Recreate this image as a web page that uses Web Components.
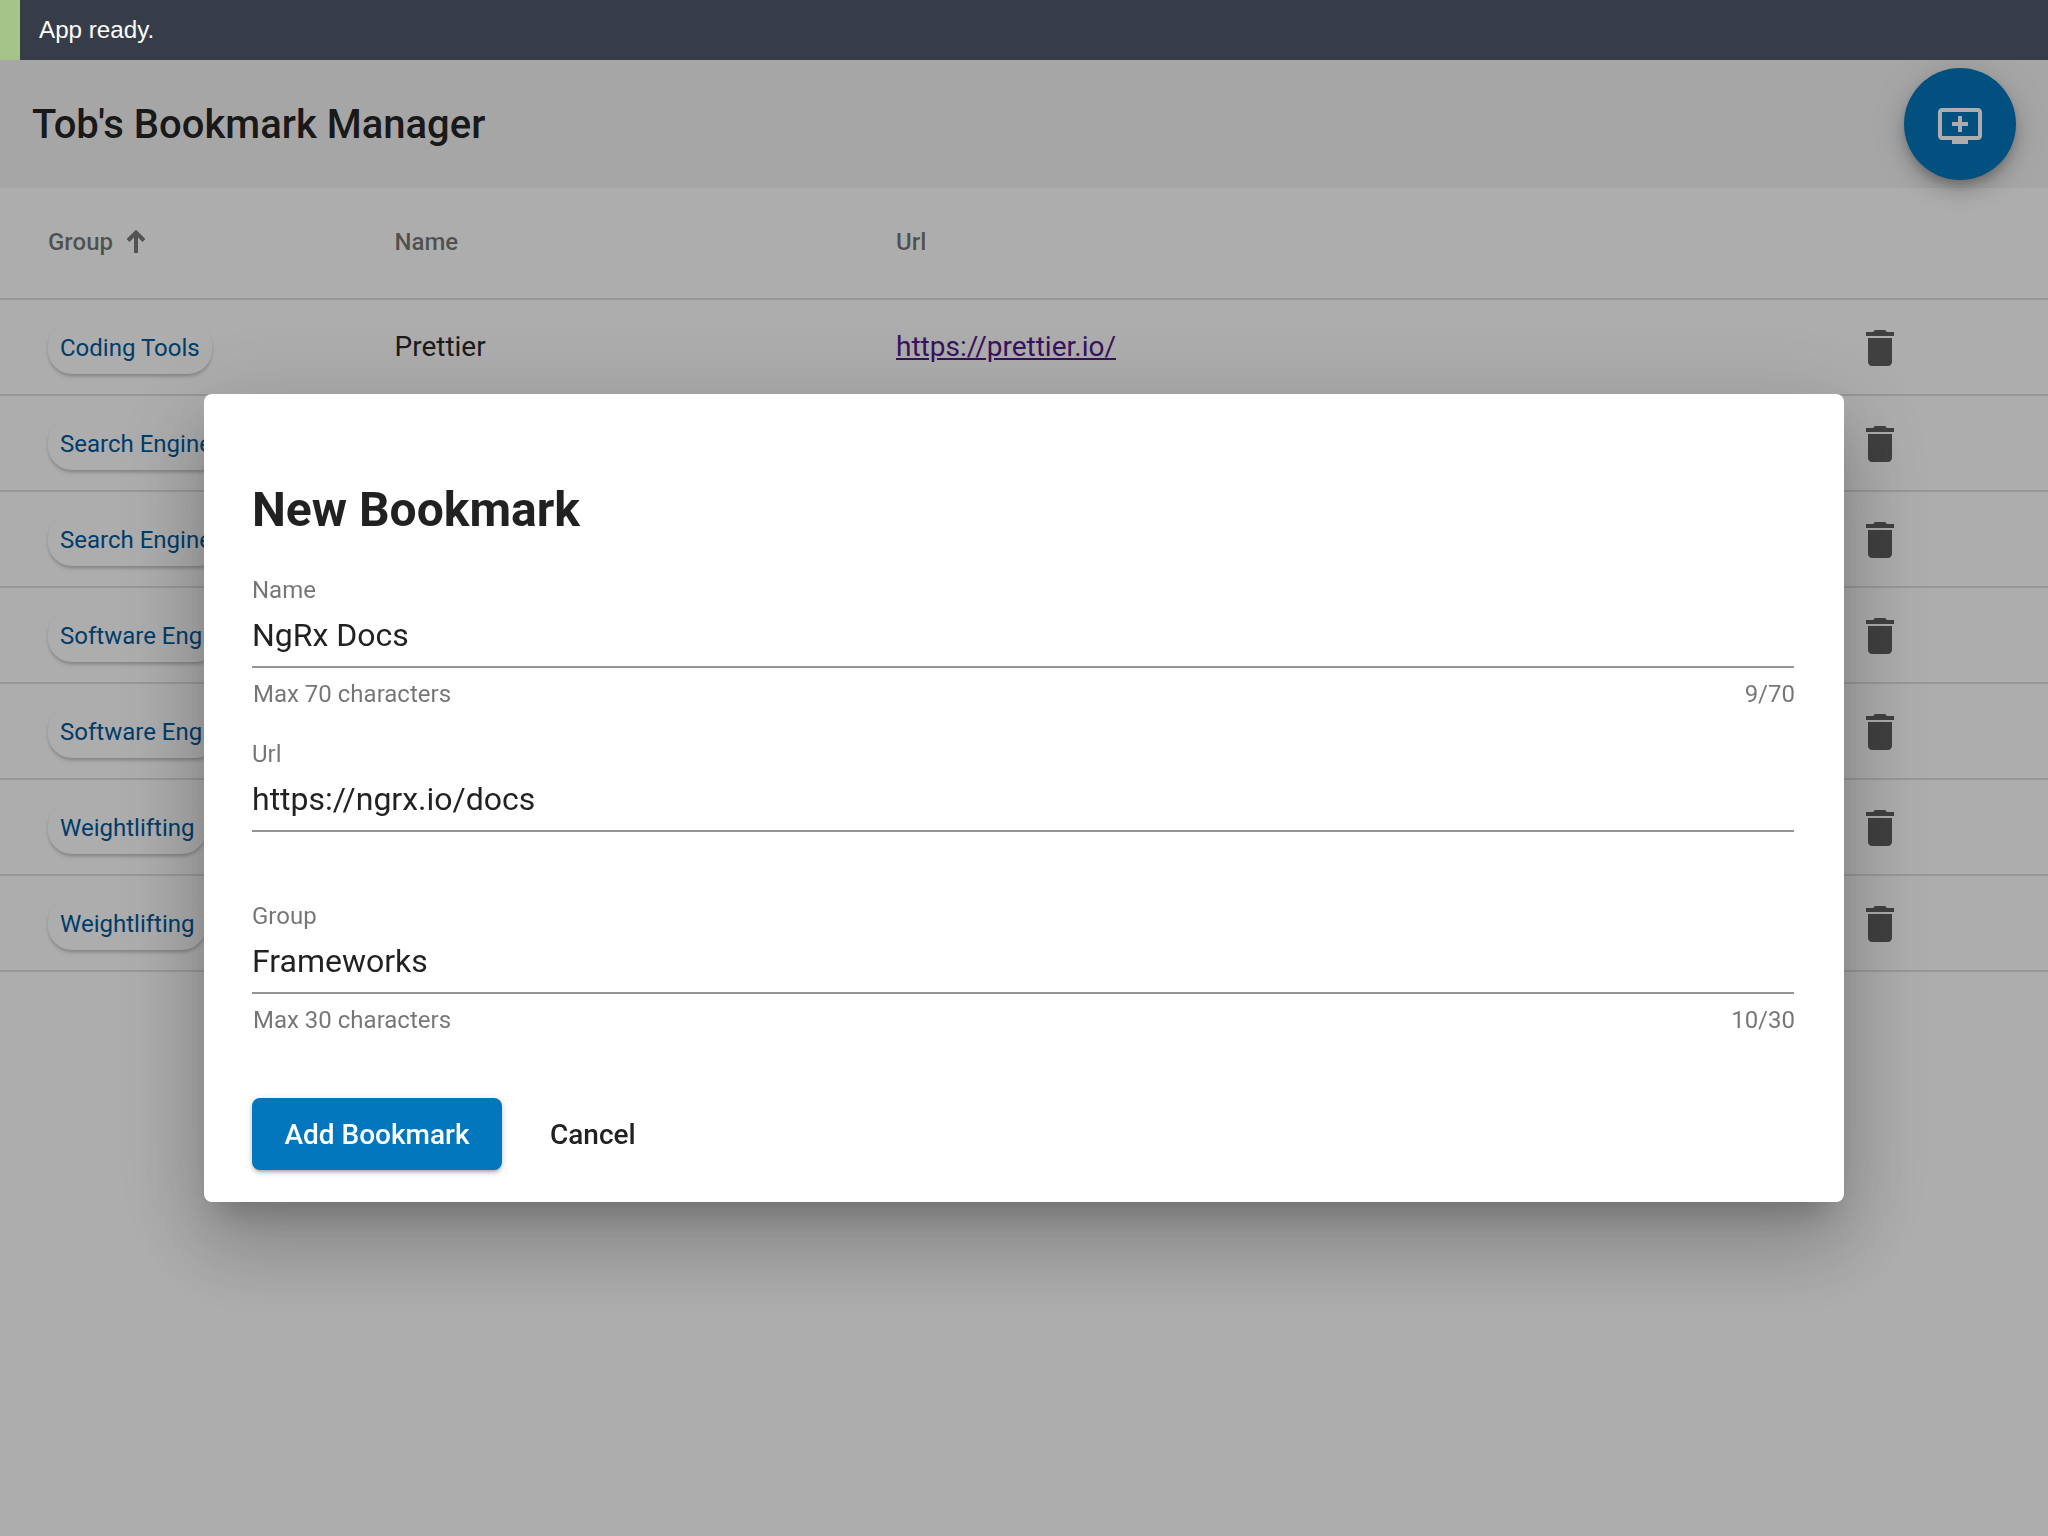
<!DOCTYPE html>
<html lang="en"><head><meta charset="utf-8"><title>Tob's Bookmark Manager</title>
<style>
html,body{margin:0;padding:0;height:100%;background:#fff;font-family:Roboto,"Liberation Sans",sans-serif;color:rgba(0,0,0,.87)}
body{display:flex;flex-direction:column;height:1536px;overflow:hidden}
</style></head><body>
<app-toast>App ready.</app-toast>
<app-toolbar>Tob's Bookmark Manager</app-toolbar>
<bookmark-table>
  <bookmark-row group="Coding Tools" name="Prettier" url="https://prettier.io/"></bookmark-row>
  <bookmark-row group="Search Engine"></bookmark-row>
  <bookmark-row group="Search Engine"></bookmark-row>
  <bookmark-row group="Software Engi"></bookmark-row>
  <bookmark-row group="Software Engi"></bookmark-row>
  <bookmark-row group="Weightlifting"></bookmark-row>
  <bookmark-row group="Weightlifting"></bookmark-row>
</bookmark-table>
<modal-dialog heading="New Bookmark">
  <text-field label="Name" value="NgRx Docs" hint="Max 70 characters" count="9/70" style="height:164px"></text-field>
  <text-field label="Url" value="https://ngrx.io/docs" style="height:162px"></text-field>
  <text-field label="Group" value="Frameworks" hint="Max 30 characters" count="10/30"></text-field>
  <action-button slot="actions" primary>Add Bookmark</action-button>
  <action-button slot="actions">Cancel</action-button>
</modal-dialog>
<script>
function def(name, html, init){
  customElements.define(name, class extends HTMLElement{
    constructor(){super();this.attachShadow({mode:'open'}).innerHTML=html;}
    connectedCallback(){ if(init) init(this, this.shadowRoot); }
  });
}
def('app-toast',`<style>
:host{display:flex;position:relative;z-index:20;flex:none;height:60px;background:#363d48;color:#fff;border-left:20px solid #a4c48a;box-sizing:border-box;font:24.2px/60px "Liberation Sans",Arial,sans-serif;padding-left:19px}
</style><slot></slot>`);
def('app-toolbar',`<style>
:host{display:flex;align-items:center;flex:none;position:relative;height:128px;background:#f5f5f5;padding:2px 32px 0;box-sizing:border-box;font:500 40px/48px Roboto,sans-serif;color:rgba(0,0,0,.87)}
button{position:absolute;right:32px;top:8px;width:112px;height:112px;border:0;padding:0;border-radius:50%;background:#0277bd;display:flex;align-items:center;justify-content:center;box-shadow:0 6px 10px -2px rgba(0,0,0,.2),0 12px 20px 0 rgba(0,0,0,.14),0 2px 36px 0 rgba(0,0,0,.12)}
svg{width:48px;height:48px;fill:#fff;display:block;position:relative;top:2px}
</style><slot></slot><button aria-label="Add bookmark"><svg viewBox="0 0 24 24"><path d="M21 3H3c-1.11 0-2 .89-2 2v12c0 1.1.89 2 2 2h5v2h8v-2h5c1.1 0 1.99-.9 1.99-2L23 5c0-1.11-.9-2-2-2zm0 14H3V5h18v12zm-5-7v2h-3v3h-2v-3H8v-2h3V7h2v3h3z"/></svg></button>`);
const cols='grid-template-columns:346.5px 501.5px 1fr;';
def('bookmark-table',`<style>
:host{display:block;flex:none;background:#fff}
.head{display:grid;${cols}height:112px;box-sizing:border-box;padding-left:48px;border-bottom:2px solid #e0e0e0;align-items:center;font:500 24px/32px Roboto,sans-serif;color:rgba(0,0,0,.54)}
.head>*{position:relative;top:-1px}
.sort{display:flex;align-items:center;gap:13px}
svg{width:20px;height:24px;display:block}
</style><div class="head"><div class="sort"><span>Group</span><svg viewBox="0 0 20 24"><path d="M10 2 L10 23 M2 10.5 L10 2.5 L18 10.5" fill="none" stroke="#7b7b7b" stroke-width="4"/></svg></div><div>Name</div><div>Url</div></div><slot></slot>`);
def('group-chip',`<style>
:host{display:inline-block;height:52px;box-sizing:border-box;padding:0 12px;border-radius:24px;background:#fff;color:#005a9c;font:400 24px/52px Roboto,sans-serif;white-space:nowrap;box-shadow:0 3px 4px -1px rgba(0,0,0,.2),0 2px 3px 0 rgba(0,0,0,.08)}
</style><slot></slot>`);
def('bookmark-row',`<style>
:host{display:grid;${cols}height:96px;box-sizing:border-box;padding-left:48px;border-bottom:2px solid #e0e0e0;align-items:center;font:400 28px/36px Roboto,sans-serif;color:rgba(0,0,0,.87);position:relative}
a{color:#551a8b;text-decoration:underline}
.c{display:flex;align-items:center;padding-top:2px}
.url{display:flex;justify-content:space-between;align-items:center;padding-right:144px}
svg{width:48px;height:48px;fill:#5f5f5f;display:block;margin-left:auto;position:relative;top:1px}
</style><div class="c"><group-chip></group-chip></div><div class="n"></div><div class="url"><a></a><svg viewBox="0 0 24 24"><path d="M6 19c0 1.1.9 2 2 2h8c1.1 0 2-.9 2-2V7H6v12zM19 4h-3.5l-1-1h-5l-1 1H5v2h14V4z"/></svg></div>`,
(el,s)=>{
  s.querySelector('group-chip').textContent=el.getAttribute('group');
  s.querySelector('.n').textContent=el.getAttribute('name')||'';
  const a=s.querySelector('a'),u=el.getAttribute('url');
  if(u){a.textContent=u;a.href='#';}else a.remove();
});
def('modal-dialog',`<style>
:host{position:fixed;inset:0;z-index:10;background:rgba(0,0,0,.32);display:block}
.d{position:absolute;left:204px;top:394px;width:1640px;height:808px;box-sizing:border-box;background:#fff;border-radius:8px;padding:0 50px 0 48px;box-shadow:0 22px 30px -14px rgba(0,0,0,.2),0 48px 76px 6px rgba(0,0,0,.14),0 18px 92px 16px rgba(0,0,0,.12);display:flex;flex-direction:column}
h2{margin:0;padding-top:84px;font:700 48px/64px Roboto,sans-serif;color:rgba(0,0,0,.87)}
.f{display:flex;flex-direction:column;margin-top:32px}
.a{display:flex;gap:24px;position:absolute;left:48px;top:704px}
</style><div class="d"><h2></h2><div class="f"><slot></slot></div><div class="a"><slot name="actions"></slot></div></div>`,
(el,s)=>{s.querySelector('h2').textContent=el.getAttribute('heading');});
def('text-field',`<style>
:host{display:block;height:163px;box-sizing:border-box;font-family:Roboto,sans-serif}
.l{font-size:24px;line-height:32px;color:rgba(0,0,0,.54)}
.v{font-size:32px;line-height:44px;margin-top:7px;height:49px;color:rgba(0,0,0,.87);border-bottom:2px solid #949494;padding-bottom:4px}
.h{display:flex;justify-content:space-between;font-size:24px;line-height:32px;color:rgba(0,0,0,.54);margin:10px -1px 0 0;padding-left:1px}
</style><div class="l"></div><div class="v"></div><div class="h"><span class="m"></span><span class="c"></span></div>`,
(el,s)=>{
  s.querySelector('.l').textContent=el.getAttribute('label');
  s.querySelector('.v').textContent=el.getAttribute('value');
  s.querySelector('.m').textContent=el.getAttribute('hint')||'';
  s.querySelector('.c').textContent=el.getAttribute('count')||'';
});
def('action-button',`<style>
:host{display:inline-flex;align-items:center;justify-content:center;height:72px;padding:2px 24px 0;box-sizing:border-box;border-radius:8px;font:500 28px/70px Roboto,sans-serif;color:rgba(0,0,0,.87)}
:host([primary]){min-width:250px;background:#0277bd;color:#fff;box-shadow:0 3px 3px -2px rgba(0,0,0,.2),0 3px 4px 0 rgba(0,0,0,.14),0 1px 8px 0 rgba(0,0,0,.12)}
</style><slot></slot>`);
</script>
</body></html>
